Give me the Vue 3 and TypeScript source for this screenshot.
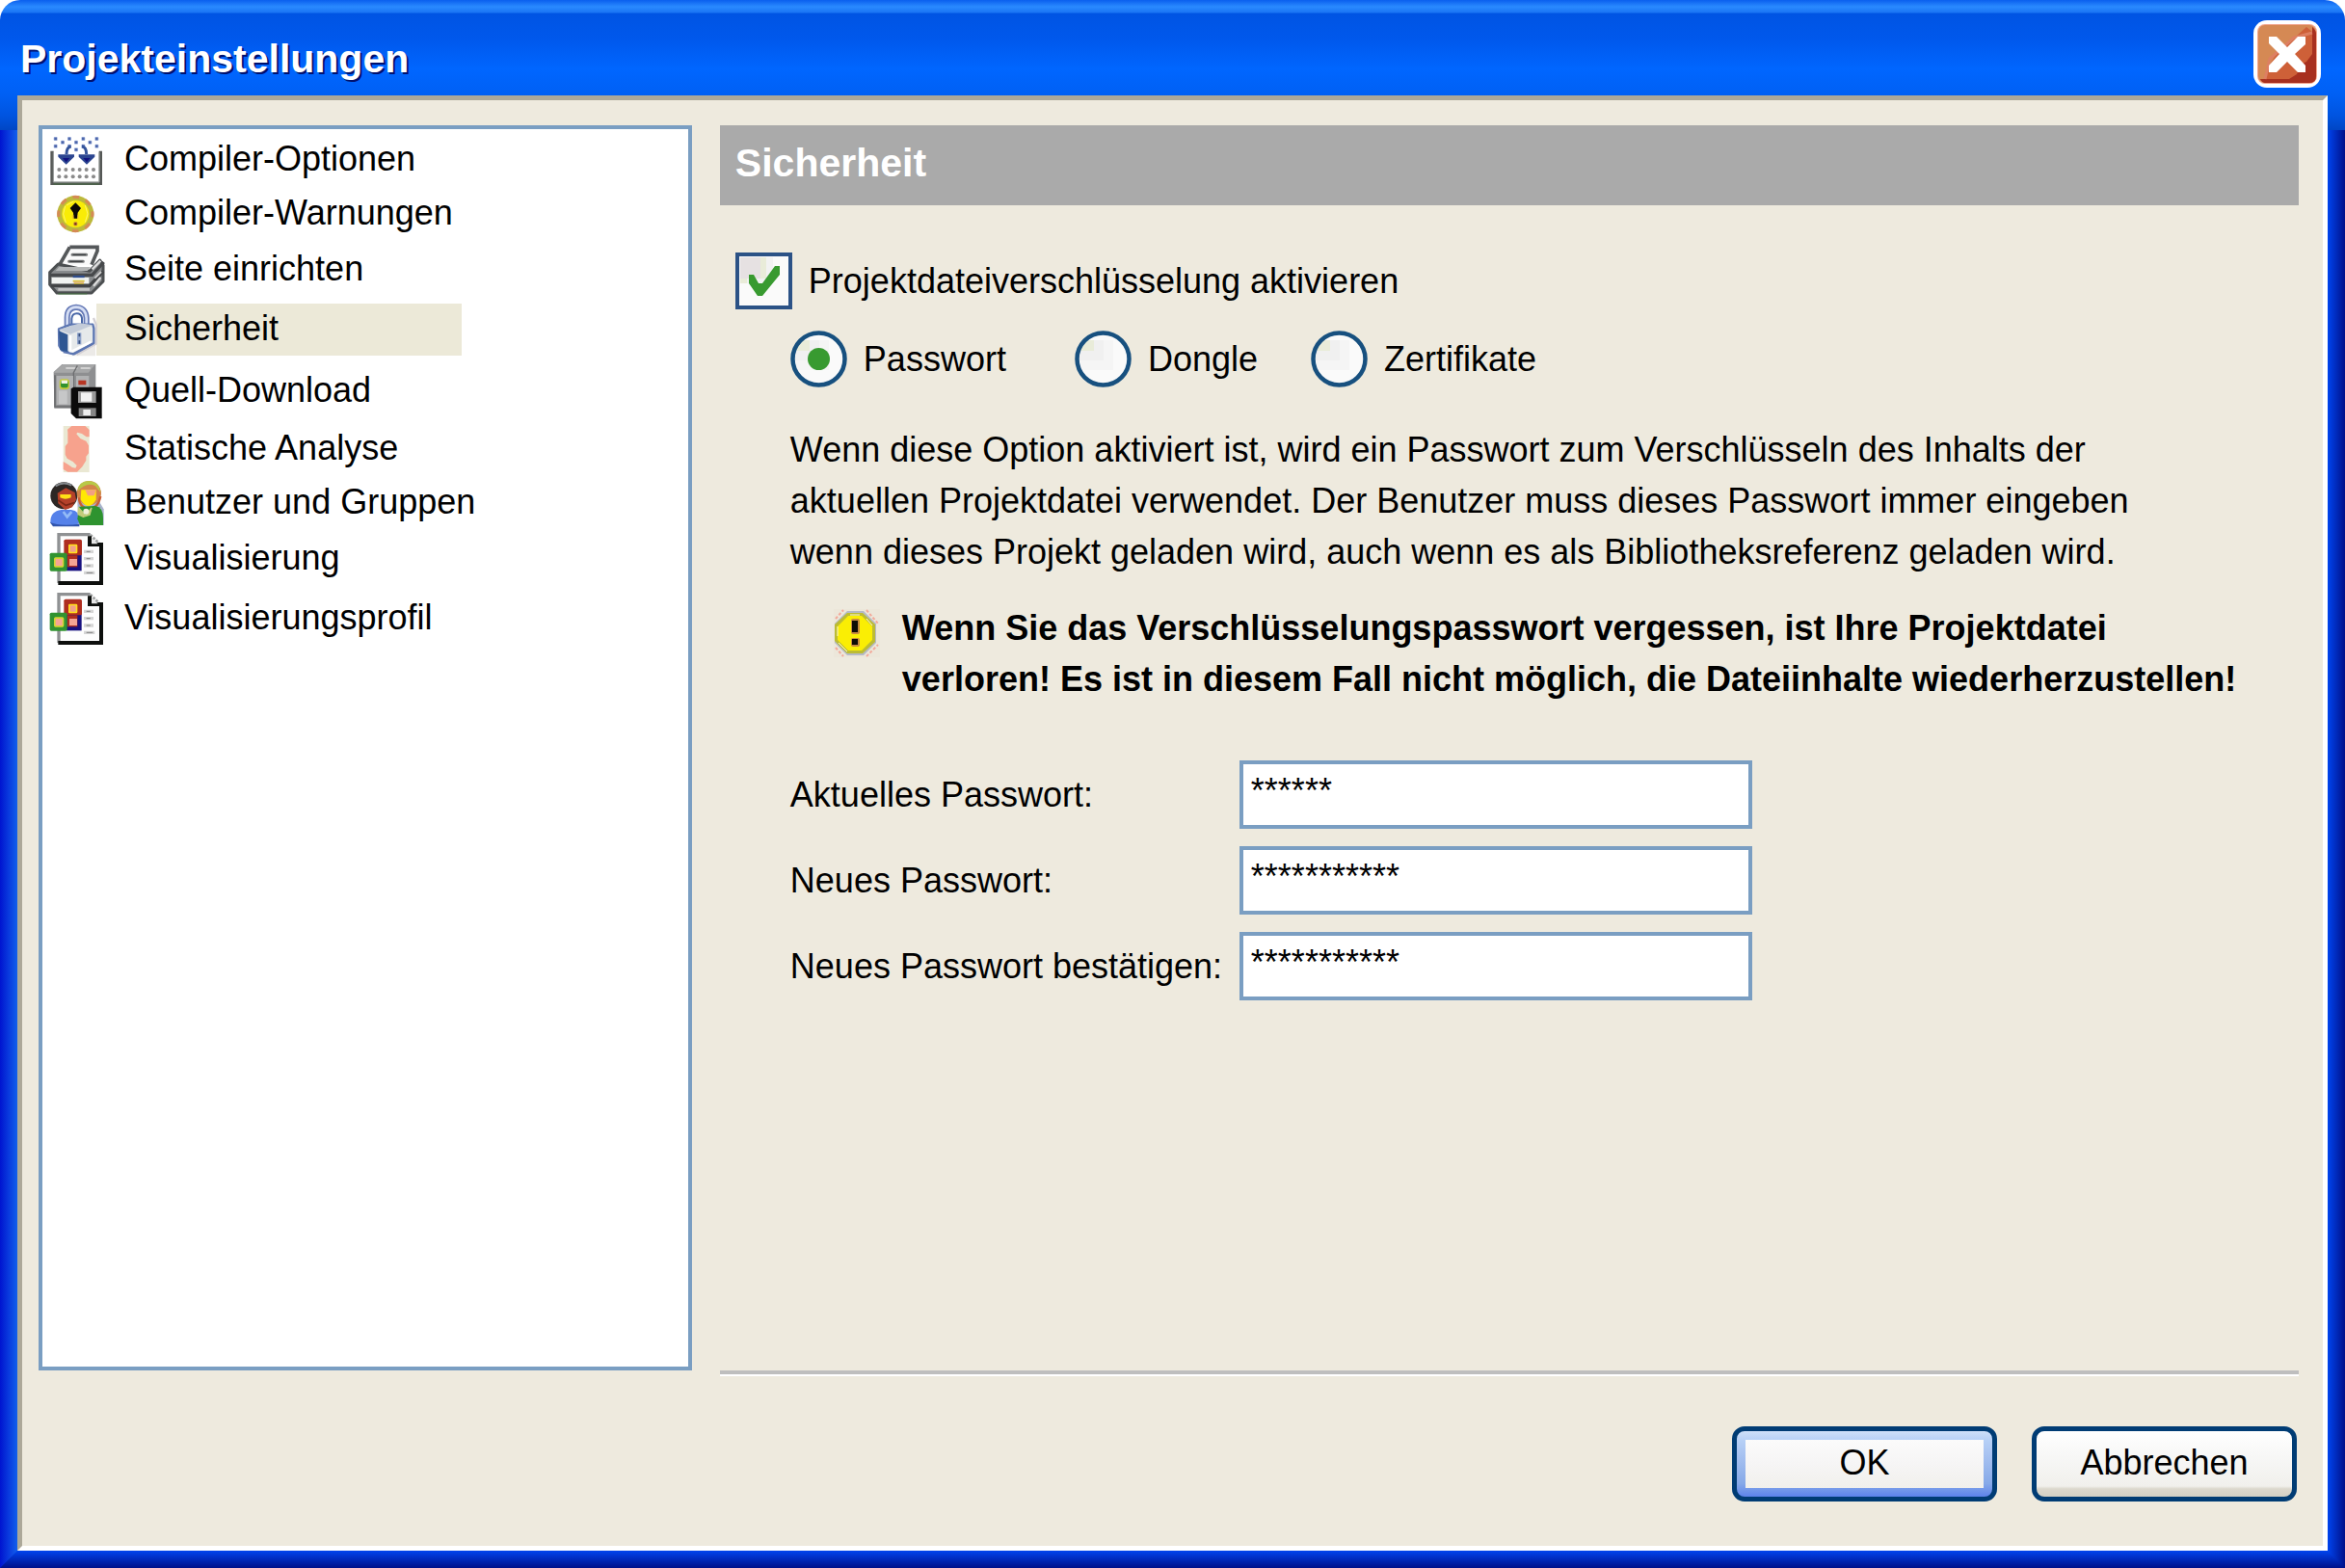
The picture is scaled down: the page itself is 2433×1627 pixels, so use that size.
<script setup lang="ts">
import { ref } from 'vue'

interface Page {
  id: string
  label: string
  row: 'short' | 'medium' | 'tall'
}

const pages: Page[] = [
  { id: 'options', label: 'Compiler-Optionen', row: 'short' },
  { id: 'warnings', label: 'Compiler-Warnungen', row: 'short' },
  { id: 'print', label: 'Seite einrichten', row: 'medium' },
  { id: 'security', label: 'Sicherheit', row: 'tall' },
  { id: 'source', label: 'Quell-Download', row: 'tall' },
  { id: 'analysis', label: 'Statische Analyse', row: 'short' },
  { id: 'users', label: 'Benutzer und Gruppen', row: 'short' },
  { id: 'visu', label: 'Visualisierung', row: 'medium' },
  { id: 'visuprofile', label: 'Visualisierungsprofil', row: 'tall' },
]
const current = ref('security')

const encrypt = ref(true)
const methods = ['Passwort', 'Dongle', 'Zertifikate']
const method = ref('Passwort')

const fields = ref([
  { id: 'pw-current', label: 'Aktuelles Passwort:', value: '******' },
  { id: 'pw-new', label: 'Neues Passwort:', value: '***********' },
  { id: 'pw-confirm', label: 'Neues Passwort bestätigen:', value: '***********' },
])

const particles = [
  [54, 38], [97, 38], [140, 38], [182, 38], [76, 49], [118, 49], [161, 49],
  [54, 61], [97, 61], [140, 61], [182, 61], [118, 72],
]
const gridX = [65, 86, 108, 129, 150, 172]
const gridY = [134, 156]
</script>

<template>
  <div class="window">
    <header class="titlebar">
      <h1>Projekteinstellungen</h1>
      <button class="close" type="button" aria-label="Schließen">
        <svg viewBox="0 0 70 70" width="70" height="70">
          <rect width="70" height="70" rx="14" fill="#fff" />
          <rect x="4" y="4" width="62" height="62" rx="8" fill="#f3a78f" />
          <rect x="5" y="5" width="60" height="60" rx="7" fill="#d58954" />
          <path d="M61 12v-5q4 3 4 8v43q0 7-7 7H15q-5 0-8-4h5q6-20 13-27l30-27z" fill="#ce6038" />
          <path d="M61 7q4 3 4 8v43q0 7-7 7H12q-3 0-5-4h30l8-5 4-10 6-3 6-8z" fill="#a8301f" />
          <path d="M12 61l5-21L42 18l19-5" fill="none" stroke="#dd7f62" stroke-width="3" />
          <path d="M16 17h8l11 11 11-11h8v8L43 35l11 12v7h-8L35 43 24 54h-8v-7l11-12-11-11z" fill="#fff" />
        </svg>
      </button>
    </header>

    <main class="client">
      <nav class="pages" aria-label="Kategorien">
        <a
          v-for="p in pages"
          :key="p.id"
          href="#"
          :class="['page', p.row, { active: current === p.id }]"
          @click.prevent="current = p.id"
        >
          <svg v-if="p.id === 'options'" class="icon" viewBox="31 26 177 159" width="59" height="53">
            <path d="M43 76V177H194V76" fill="none" stroke="#555856" stroke-width="10" />
            <path d="M47 80V173H190V80" fill="none" stroke="#9da19f" stroke-width="3" />
            <path d="M48 179H190" stroke="#3f7a3a" stroke-width="2" />
            <rect v-for="([x, y], i) in particles" :key="i" :x="x - 6" :y="y - 6" width="12" height="12" rx="3" fill="#a9b9e2" />
            <rect v-for="([x, y], i) in particles" :key="'c' + i" :x="x - 4" :y="y - 4" width="8" height="8" fill="#4d66a9" />
            <path d="M102 62q-14 2-14 24M136 62q14 2 14 24" fill="none" stroke="#35549a" stroke-width="9" />
            <path d="M62 87h50v7l-25 24-25-24zM126 87h50v7l-25 24-25-24z" fill="#2b4590" />
            <path d="M76 98h22l-11 13zM140 98h22l-11 13z" fill="#10107e" />
            <template v-for="y in gridY" :key="y">
              <circle v-for="x in gridX" :key="x" :cx="x" :cy="y" r="6" fill="#8a8a8a" />
            </template>
          </svg>

          <svg v-else-if="p.id === 'warnings'" class="icon" viewBox="31 214 177 126" width="59" height="42">
            <circle cx="116" cy="277" r="57" fill="#bcb93c" />
            <circle cx="116" cy="277" r="53" fill="none" stroke="#d58a55" stroke-width="9" stroke-dasharray="20 21.6" stroke-dashoffset="10" />
            <circle cx="116" cy="277" r="42" fill="#f9ec06" />
            <path d="M84 252l-6 25 8 27M110 238l-22 12M146 250l8 27-8 26" fill="none" stroke="#fdf7a8" stroke-width="2" />
            <path d="M116 242l17 17-10 14-2 18h-10l-2-18-10-14z" fill="#0b0906" />
            <path d="M109 280v12M123 280v12" stroke="#d58a55" stroke-width="2" />
            <rect x="110" y="302" width="12" height="12" rx="4" fill="#c9803c" />
            <rect x="113" y="305" width="6" height="6" fill="#6d2d16" />
          </svg>

          <svg v-else-if="p.id === 'print'" class="icon" viewBox="31 369 177 162" width="59" height="54">
            <path d="M98 377h90l-20 58h-100z" fill="#fafafa" />
            <path d="M98 379h86v12l-18 43M98 379l-32 56" fill="none" stroke="#55585a" stroke-width="11" />
            <path d="M106 403h44M96 424h44" stroke="#77797a" stroke-width="9" stroke-linecap="round" />
            <path d="M108 403h40M98 424h40" stroke="#3f4244" stroke-width="4" />
            <path d="M62 432L36 458v38l22 26h108l36-36v-50l-10-16-32 34z" fill="#888b8d" stroke="#4c4f51" stroke-width="9" stroke-linejoin="round" />
            <path d="M65 441h98l-10 12H54z" fill="#b5b7b7" />
            <path d="M38 466h130l36-40" fill="none" stroke="#47494b" stroke-width="10" />
            <rect x="42" y="474" width="116" height="19" fill="#f1f3f1" />
            <path d="M108 471h36" stroke="#304e8d" stroke-width="7" />
            <path d="M108 485h36M112 493h30" stroke="#d8c43d" stroke-width="5" />
            <path d="M110 489h32" stroke="#e09b5a" stroke-width="3" />
            <path d="M40 499h120l42-44" fill="none" stroke="#424446" stroke-width="10" />
            <path d="M62 511h98" stroke="#c4c4c4" stroke-width="8" />
            <path d="M172 500l22-26M168 448l26-26" stroke="#dcdcdc" stroke-width="7" />
            <path d="M176 476l20-20" stroke="#cfcfcf" stroke-width="6" />
            <path d="M62 525h90" stroke="#3f8a3a" stroke-width="2" />
          </svg>

          <svg v-else-if="p.id === 'security'" class="icon" viewBox="31 555 177 165" width="59" height="55">
            <path d="M64 718l40-2 74-36v38z" fill="#d9d6cf" opacity=".5" />
            <path d="M172 600l8 20v60l-60 34" fill="none" stroke="#d4d0d4" stroke-width="7" />
            <path d="M90 634v-36q0-30 28-32 30 2 32 34v28" fill="none" stroke="#6478b5" stroke-width="18" />
            <path d="M90 634v-36q0-30 28-32 30 2 32 34v28" fill="none" stroke="#d5def4" stroke-width="8" />
            <path d="M104 624v-22q2-16 16-16t16 14v18" fill="none" stroke="#4a68a8" stroke-width="6" />
            <path d="M64 634l38-14 68 0 3 12v46l-64 34-36-12-8-14z" fill="#e6e9ea" stroke="#5c76b2" stroke-width="7" stroke-linejoin="round" />
            <path d="M64 640l28 12v60l-24-14z" fill="#2f5793" />
            <path d="M64 636l36 14 70-28-40-6z" fill="#c3cbd8" />
            <path d="M100 654v52l64-32" fill="none" stroke="#fff" stroke-width="8" />
            <path d="M78 706l34 6 58-32" fill="none" stroke="#5c76b2" stroke-width="6" />
            <rect x="121" y="646" width="13" height="36" fill="#92a6cc" />
            <path d="M128 648v10M128 670v10" stroke="#38507f" stroke-width="5" />
          </svg>

          <svg v-else-if="p.id === 'source'" class="icon" viewBox="31 18 177 180" width="59" height="60">
            <path d="M48 48l26-24h105v112l-12 25H50z" fill="#8e8f91" />
            <path d="M48 50l28-26h102l-22 26z" fill="#a6a7a8" />
            <path d="M86 36h36M132 36h30" stroke="#d1d1d1" stroke-width="6" />
            <path d="M122 28l-12 22v98" fill="none" stroke="#6d6e70" stroke-width="4" />
            <rect x="57" y="60" width="52" height="90" fill="#b1b2b3" />
            <rect x="118" y="60" width="40" height="50" fill="#b1b2b3" />
            <rect x="64" y="106" width="26" height="42" fill="#c6c7c8" />
            <path d="M52 58v98h52" fill="none" stroke="#6b6c6e" stroke-width="5" />
            <rect x="66" y="70" width="31" height="32" rx="9" fill="#c5c93d" />
            <rect x="70" y="75" width="23" height="22" rx="6" fill="#31932f" />
            <rect x="72" y="74" width="19" height="10" fill="#f1f3e3" />
            <rect x="125" y="74" width="24" height="14" fill="#b73624" />
            <path d="M102 100l8-5h88v98h-80l-16-16z" fill="#0b0b0b" />
            <rect x="124" y="108" width="56" height="36" fill="#9a9a9a" />
            <rect x="133" y="112" width="34" height="28" fill="#f3f3f3" />
            <rect x="126" y="160" width="54" height="26" fill="#868686" />
            <rect x="140" y="165" width="23" height="18" fill="#efefef" />
          </svg>

          <svg v-else-if="p.id === 'analysis'" class="icon" viewBox="31 213 177 150" width="59" height="50">
            <rect x="78" y="216" width="81" height="144" fill="#eae8d3" />
            <path d="M104 216h42l13 12v22h-9l-14-10-14-4-3 5 12 14 18 8 8 14v24l-8 10v12l-12 20-16 16H92l-14-8v-24l14 8 14 10 10 2 4-8-12-12-18-10-6-12v-26l8-10v-32l-1-10z" fill="#f7a28d" />
          </svg>

          <svg v-else-if="p.id === 'users'" class="icon" viewBox="31 379 177 147" width="59" height="49">
            <path d="M122 440h64l18 30v50h-80z" fill="#a8b3cc" />
            <circle cx="80" cy="428" r="42" fill="#2c2725" />
            <path d="M54 398q24-16 50-2" fill="none" stroke="#83888c" stroke-width="6" />
            <path d="M60 420l26-16 28 14 4 22-12 24-22 8-22-20z" fill="#b4412a" />
            <path d="M68 424h34v10q-18 8-34 0z" fill="#ffe016" />
            <path d="M62 442l24 16 26-8" fill="none" stroke="#7b2716" stroke-width="5" />
            <path d="M38 510q0-34 34-38h30q28 2 28 36l-10 12H46z" fill="#5581ea" />
            <path d="M78 478l12 16 14-16" fill="none" stroke="#93bbf6" stroke-width="8" />
            <path d="M36 510q30 14 92 6v8H46z" fill="#3154ac" />
            <circle cx="158" cy="420" r="38" fill="#d38549" />
            <path d="M124 414q-2-30 34-32 34 2 36 36l-16-20q-28-14-54 16z" fill="#b8c947" />
            <path d="M134 410h46v30q-10 20-24 20t-24-20z" fill="#ffe804" />
            <path d="M146 410h34l-6 18h-20z" fill="#f2a083" />
            <path d="M126 434q4 34 32 34t36-38" fill="none" stroke="#c95e35" stroke-width="7" />
            <path d="M128 462l50-2q24 4 24 38v22h-72l-8-20z" fill="#2e932f" />
            <path d="M126 466l22 24 18-24-6 22-20 6-16-8z" fill="#c3cc7a" stroke="#c3cc7a" stroke-width="4" />
            <circle cx="149" cy="477" r="9" fill="#f0f0d8" />
          </svg>

          <svg v-else class="icon" viewBox="31 543 177 168" width="59" height="56">
            <path d="M64 552h100l32 34v116H64z" fill="#fdfdfd" />
            <path d="M64 702V551h98" fill="none" stroke="#8f9193" stroke-width="10" />
            <path d="M162 552l34 34" stroke="#a0a2a2" stroke-width="9" stroke-dasharray="8 4" />
            <path d="M160 556v26h36v120H62" fill="none" stroke="#0d0f0d" stroke-width="12" />
            <path d="M166 562v18h20z" fill="#e8e8e8" />
            <path d="M142 604h30M142 626h30M142 648h30M142 670h34" stroke="#d5d5d5" stroke-width="10" />
            <path d="M150 604h12M150 626h12M150 648h12M150 670h20" stroke="#838383" stroke-width="3" />
            <path d="M88 612h47v52H88z" fill="#17107f" />
            <rect x="80" y="566" width="56" height="50" rx="5" fill="#ae2d1f" />
            <rect x="94" y="581" width="28" height="29" rx="4" fill="#ffe01a" />
            <rect x="99" y="586" width="18" height="19" fill="#f2a08a" />
            <path d="M90 616h32v36H90z" fill="#ae2d1f" />
            <rect x="97" y="627" width="24" height="21" fill="#f5a594" />
            <rect x="36" y="608" width="54" height="57" rx="5" fill="#319330" />
            <rect x="49" y="622" width="31" height="31" rx="5" fill="#d5d632" />
            <rect x="54" y="627" width="21" height="21" fill="#f5a594" />
          </svg>
          <span>{{ p.label }}</span>
        </a>
      </nav>

      <section class="panel">
        <h2>Sicherheit</h2>
        <label class="choice">
          <input v-model="encrypt" type="checkbox" class="native" />
          <svg class="mark" viewBox="0 0 59 59" width="59" height="59">
            <rect x="2" y="2" width="55" height="55" fill="#fafafa" stroke="#2b5286" stroke-width="4" />
            <path d="M5 5h21v22H5z" fill="#e6e1e2" />
            <path d="M26 5h6v22h-6zM5 27h7v5H5z" fill="#e9ecd9" />
            <path d="M32 5h7v27H12v-5h20z" fill="#f2f2f2" />
            <path v-if="encrypt" d="M14 23h5l5 9h4l13-18h5v9L28 45h-5l-9-13z" fill="#389a30" />
          </svg>
          <span>Projektdateiverschlüsselung aktivieren</span>
        </label>

        <div class="body">
          <div class="radios" role="radiogroup" aria-label="Verschlüsselung">
            <label v-for="m in methods" :key="m" class="choice">
              <input v-model="method" type="radio" name="method" :value="m" class="native" />
              <svg class="mark" viewBox="0 0 59 59" width="59" height="59">
                <circle cx="29.5" cy="29.5" r="27" fill="#fafafa" />
                <path d="M10 10h30v31H6V20z" fill="#f5f5f5" />
                <path d="M10 10h20v21H5V20z" fill="#f0f0f0" />
                <path d="M10 10h10v11H6z" fill="#e9ecd9" />
                <circle cx="29.5" cy="29.5" r="27" fill="none" stroke="#17507f" stroke-width="4.5" />
                <circle v-if="method === m" cx="29.5" cy="29.5" r="11.5" fill="#389a30" />
              </svg>
              <span>{{ m }}</span>
            </label>
          </div>

          <p class="info">
            Wenn diese Option aktiviert ist, wird ein Passwort zum Verschlüsseln des Inhalts der<br />
            aktuellen Projektdatei verwendet. Der Benutzer muss dieses Passwort immer eingeben<br />
            wenn dieses Projekt geladen wird, auch wenn es als Bibliotheksreferenz geladen wird.
          </p>

          <div class="warning">
            <svg viewBox="0 0 48 50" width="48" height="50">
              <rect width="48" height="50" fill="#ece7da" />
              <path d="M2 10L10 1M34 1l12 14M2 40l8 9M34 49l12-12" stroke="#f3a99a" stroke-width="2" stroke-dasharray="3 2" />
              <path d="M14 2h17l13 13v20L31 48H14L1 35V15z" fill="#b5bac6" />
              <path d="M14 4h16l13 12v18L30 46H14L1 33V16z" fill="#bcbc33" />
              <path d="M15 7h14l11 11v14L29 43H15L4 32V18z" fill="#faee04" />
              <path d="M17 6h10M4 18v10M5 35l9 9M34 10l6 7" stroke="#fffbd0" />
              <rect x="18" y="10" width="9" height="16" rx="2" fill="#c98a3e" />
              <rect x="19" y="12" width="6" height="12" fill="#100c06" />
              <rect x="18" y="30" width="9" height="9" rx="2" fill="#c98a3e" />
              <rect x="19" y="31" width="6" height="6" fill="#100c06" />
            </svg>
            <p>
              Wenn Sie das Verschlüsselungspasswort vergessen, ist Ihre Projektdatei<br />
              verloren! Es ist in diesem Fall nicht möglich, die Dateiinhalte wiederherzustellen!
            </p>
          </div>

          <form class="fields" @submit.prevent>
            <template v-for="f in fields" :key="f.id">
              <label :for="f.id">{{ f.label }}</label>
              <input :id="f.id" v-model="f.value" type="text" autocomplete="off" />
            </template>
          </form>
        </div>
      </section>

      <hr />

      <footer class="actions">
        <button type="button" class="default">OK</button>
        <button type="button">Abbrechen</button>
      </footer>
    </main>
  </div>
</template>

<style>
body {
  margin: 0;
  background: #fff;
}
</style>

<style scoped>
* {
  box-sizing: border-box;
}

.window {
  position: relative;
  display: flex;
  flex-direction: column;
  min-height: 100vh;
  padding: 0 18px 18px;
  border-radius: 21px 21px 0 0;
  overflow: hidden;
  color: #000;
  font-family: 'Liberation Sans', Arial, sans-serif;
  font-size: 36px;
  line-height: 53px;
  background:
    linear-gradient(#0a5fee 0, #2a8aff 7px, #1a74f4 13px, #0054e3 14px, #0058ec 40px, #0066ff 72px, #0060f4 98px, #0054e0 120px, #0046c4 135px) top / 100% 135px no-repeat,
    linear-gradient(90deg, #0014d0, #1260ec) left / 18px 100% no-repeat,
    linear-gradient(90deg, #0044ee, #00108a) right / 18px 100% no-repeat,
    #0044ee;
}

.window::after {
  content: '';
  position: absolute;
  right: 0;
  bottom: 0;
  left: 0;
  height: 18px;
  background: linear-gradient(#0044ee, #00108a);
  clip-path: polygon(18px 0, calc(100% - 18px) 0, 100% 100%, 0 100%);
}

.titlebar {
  display: flex;
  align-items: flex-start;
  justify-content: space-between;
  height: 99px;
  padding: 21px 7px 0 3px;
}

h1,
h2 {
  margin: 0;
  color: #fff;
  font-size: 41px;
  font-weight: bold;
}

h1 {
  line-height: 80px;
  text-shadow: 2px 2px 0 #00116e;
}

.close {
  display: block;
  padding: 0;
  border: 0;
  background: none;
}

.close svg {
  display: block;
}

.client {
  flex: 1;
  display: grid;
  grid-template-columns: 12fr 29fr;
  grid-template-rows: 1fr auto auto;
  column-gap: 29px;
  padding: 26px 25px 46px 17px;
  border: 5px solid;
  border-color: #aca899 #fff #fff #aca899;
  background: #eeeade;
}

.pages {
  border: 4px solid #7a9ec2;
  padding: 4px 6px 0;
  background: #fff;
}

.page {
  display: flex;
  align-items: center;
  gap: 20px;
  color: #000;
  text-decoration: none;
}

.page.short {
  height: 56px;
}

.page.medium {
  height: 60px;
}

.page.tall {
  height: 64px;
}

.page.active {
  background: linear-gradient(#ece9d8, #ece9d8) 50px center / 379px 54px no-repeat;
}

.icon {
  flex: none;
}

.page span {
  padding-bottom: 3px;
}

h2 {
  height: 83px;
  padding-left: 16px;
  line-height: 78px;
  background: #aaa;
}

.choice {
  display: flex;
  align-items: center;
  gap: 17px;
}

.panel > .choice {
  margin: 49px 0 22px 16px;
}

.native {
  position: absolute;
  width: 59px;
  height: 59px;
  margin: 0;
  opacity: 0;
}

.mark {
  flex: none;
}

.body {
  padding-left: 73px;
}

.radios {
  display: flex;
  gap: 55px;
}

.radios .choice:first-child {
  margin-right: 16px;
}

.info,
.warning p {
  margin: 0;
}

.info {
  margin-top: 38px;
}

.warning {
  display: flex;
  align-items: flex-start;
  gap: 23px;
  margin-top: 26px;
  padding-left: 45px;
  font-weight: bold;
}

.warning svg {
  flex: none;
  margin-top: 7px;
}

.fields {
  display: grid;
  grid-template-columns: 466px minmax(200px, 532px);
  row-gap: 18px;
  align-items: center;
  margin-top: 58px;
}

.fields input {
  width: 100%;
  height: 71px;
  padding: 0 8px 7px;
  border: 4px solid #7a9ec2;
  border-radius: 0;
  background: #fff;
  color: #000;
  font: inherit;
  outline: none;
}

hr {
  grid-column: 2;
  width: 100%;
  height: 6px;
  margin: 0;
  border: 0;
  background: linear-gradient(#bebebe 4px, #fff 4px);
}

.actions {
  grid-column: 2;
  display: flex;
  justify-content: flex-end;
  gap: 36px;
  margin-top: 52px;
  padding-right: 2px;
}

.actions button {
  width: 275px;
  height: 78px;
  padding: 0 0 4px;
  border: 5px solid #003c74;
  border-radius: 13px;
  background: linear-gradient(#fff, #f7f7f6 40%, #f1f0ec 84%, #dcd8cd 88%, #d3d0c4);
  color: #000;
  font: inherit;
}

.actions .default {
  background:
    linear-gradient(#fbfbfb, #f6f5f5 50%, #f1f0ec) center / calc(100% - 18px) calc(100% - 18px) no-repeat,
    linear-gradient(#cfe0f8, #b6d0f6 14%, #a5c0f0 40%, #86a9e8 80%, #5d83ec);
}
</style>
